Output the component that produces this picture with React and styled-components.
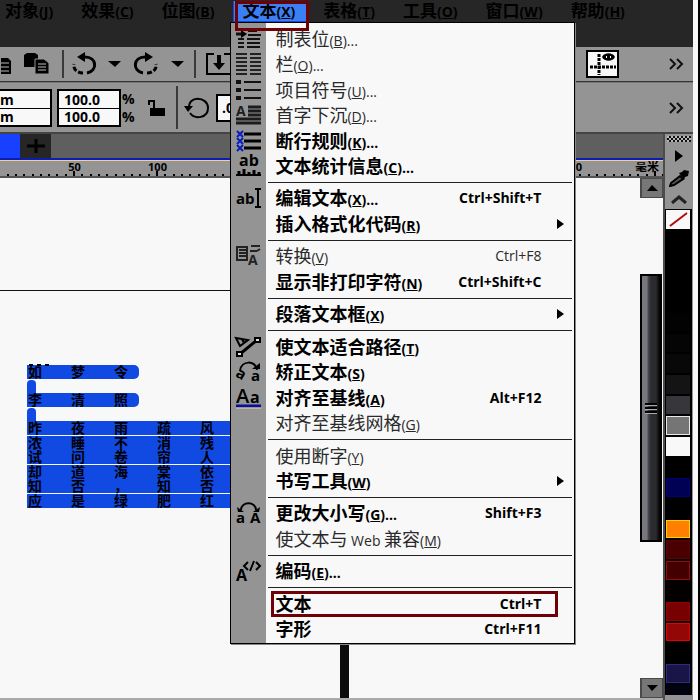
import React, { useState } from 'react';
import styled, { createGlobalStyle, css } from 'styled-components';

const menuTitles = [
	['对象', 'J'],
	['效果', 'C'],
	['位图', 'B'],
	['文本', 'X'],
	['表格', 'T'],
	['工具', 'O'],
	['窗口', 'W'],
	['帮助', 'H'],
];

// null === 구분선
const menuItems = [
	{ text: '制表位', hotkey: 'B', dots: true, icon: 'tabs', disabled: true },
	{ text: '栏', hotkey: 'O', dots: true, icon: 'columns', disabled: true },
	{ text: '项目符号', hotkey: 'U', dots: true, icon: 'bullets', disabled: true },
	{ text: '首字下沉', hotkey: 'D', dots: true, icon: 'dropCap', disabled: true },
	{ text: '断行规则', hotkey: 'K', dots: true, icon: 'breakRule' },
	{ text: '文本统计信息', hotkey: 'C', dots: true, icon: 'stats' },
	null,
	{ text: '编辑文本', hotkey: 'X', dots: true, icon: 'edit', shortcut: 'Ctrl+Shift+T' },
	{ text: '插入格式化代码', hotkey: 'R', submenu: true },
	null,
	{ text: '转换', hotkey: 'V', icon: 'convert', shortcut: 'Ctrl+F8', disabled: true },
	{ text: '显示非打印字符', hotkey: 'N', shortcut: 'Ctrl+Shift+C' },
	null,
	{ text: '段落文本框', hotkey: 'X', submenu: true },
	null,
	{ text: '使文本适合路径', hotkey: 'T', icon: 'path' },
	{ text: '矫正文本', hotkey: 'S', icon: 'straighten' },
	{ text: '对齐至基线', hotkey: 'A', icon: 'baseline', shortcut: 'Alt+F12' },
	{ text: '对齐至基线网格', hotkey: 'G', disabled: true },
	null,
	{ text: '使用断字', hotkey: 'Y', disabled: true },
	{ text: '书写工具', hotkey: 'W', submenu: true },
	null,
	{ text: '更改大小写', hotkey: 'G', dots: true, icon: 'changeCase', shortcut: 'Shift+F3' },
	{ text: '使文本与 Web 兼容', hotkey: 'M', disabled: true },
	null,
	{ text: '编码', hotkey: 'E', dots: true, icon: 'encode' },
	null,
	{ text: '文本', shortcut: 'Ctrl+T', marked: true },
	{ text: '字形', shortcut: 'Ctrl+F11' },
];

const swatches = [
	['#000'],
	['#000'],
	['#000'],
	['#000'],
	['#020202'],
	['#050505'],
	['#080808'],
	['#141414'],
	['#36363b'],
	['#757575', '#e8e8e8'],
	['#f8f8f8'],
	['#000'],
	['#000055', '#00007c'],
	['#000'],
	['#ff7f00', '#ffd000'],
	['#4a0000', '#5c0000'],
	['#440000', '#9c0808'],
	['#040000'],
	['#780000', '#960000'],
	['#930707', '#e80000'],
	['#000'],
	['#1b1446', '#2b2c88'],
	['#03020f'],
];

const verses = ['昨夜雨疏风', '浓睡不消残', '试问卷帘人', '却道海棠依', '知否，知否', '应是绿肥红'];

const icons = {
	tabs: (
		<g>
			<path d="M0 6h7" stroke="#111" strokeWidth="3" />
			<path d="M5 2l6 4-6 4z" />
			<path d="M12 3h9M12 7h13M2 11h6M11 11h13M2 15h6M11 15h13M2 19h6M11 19h13" stroke="#111" strokeWidth="2" />
		</g>
	),
	columns: (
		<path
			d="M0 1h11M14 1h11M0 5h11M14 5h11M0 9h11M14 9h11M0 13h11M14 13h11M0 17h11M14 17h11M0 21h11M14 21h11"
			stroke="#222"
			strokeWidth="2"
		/>
	),
	bullets: (
		<g stroke="#111">
			<path d="M0 3h5M0 11h5M0 19h5" strokeWidth="4" />
			<path d="M8 3h17M8 11h17M8 19h17" strokeWidth="2" />
		</g>
	),
	dropCap: (
		<g>
			<path d="M12 3h13M12 7h13M12 11h13M0 15h25M0 19h25" stroke="#1c1c1c" strokeWidth="3" />
			<text x="0" y="12" fontSize="14" fontWeight="bold" fill="#1c1c1c">A</text>
		</g>
	),
	breakRule: (
		<g>
			<path d="M8 4h17M8 11h17M8 18h17" stroke="#000" strokeWidth="3" />
			<path d="M1 1l6 6M7 1l-6 6M1 8l6 6M7 8l-6 6M1 15l6 6M7 15l-6 6" stroke="#061fbd" strokeWidth="2" />
		</g>
	),
	stats: (
		<g>
			<text x="3" y="11" fontSize="16" fontWeight="bold">ab</text>
			<path d="M0 20h25" stroke="#000" strokeWidth="2" />
			<path d="M3 16v4M8 14v6M13 17v3M18 15v5M23 17v3" stroke="#000" strokeWidth="3" />
		</g>
	),
	edit: (
		<g>
			<text x="0" y="17" fontSize="15" fontWeight="bold">ab</text>
			<path d="M22 2v18M19 2h6M19 20h6" stroke="#000" strokeWidth="2" />
		</g>
	),
	convert: (
		<g>
			<path d="M1 2h10v13H1zM3 5h7M3 8h7M3 11h7" fill="none" stroke="#222" strokeWidth="2" />
			<path d="M15 1h9M14 6h7M21 6l3-2" fill="none" stroke="#222" strokeWidth="2" />
			<text x="12" y="20" fontSize="14" fontWeight="bold" fill="#222">A</text>
		</g>
	),
	path: (
		<g fill="none" stroke="#000">
			<path d="M4 18L21 4" strokeWidth="3" />
			<path d="M1 16h5v4H1zM19 2h5v4h-5z" strokeWidth="2" fill="#ddd" />
			<path d="M0 2l12 2-8 6zM6 3l2 4" strokeWidth="2" />
		</g>
	),
	straighten: (
		<g>
			<path d="M4 10C5-1 20-1 21 9" fill="none" stroke="#000" strokeWidth="2" />
			<path d="M16 8h8V2z" />
			<text x="15" y="20" fontSize="15" fontWeight="bold">a</text>
			<text x="0" y="18" fontSize="15" fontWeight="bold" transform="rotate(30 5 14)">a</text>
		</g>
	),
	baseline: (
		<g>
			<text x="0" y="16" fontSize="20" fontWeight="600">A</text>
			<text x="14" y="16" fontSize="16" fontWeight="bold">a</text>
			<path d="M0 19h25" stroke="#05109c" strokeWidth="3" />
			<path d="M0 21h25" stroke="#f2cf9a" strokeWidth="1" />
		</g>
	),
	changeCase: (
		<g>
			<path d="M5 8C5-1 20-1 20 8" fill="none" stroke="#000" strokeWidth="2" />
			<path d="M1 5l1 5h6zM24 5l-1 5h-6z" />
			<text x="0" y="21" fontSize="15" fontWeight="bold">a</text>
			<text x="14" y="21" fontSize="15" fontWeight="bold">A</text>
		</g>
	),
	encode: (
		<g>
			<text x="0" y="21" fontSize="16" fontWeight="bold">A</text>
			<path d="M12 2L8 6l4 4M20 2l4 4-4 4M18 1l-4 10" fill="none" stroke="#000" strokeWidth="2" />
		</g>
	),
};

function MenuIcon({ name }) {
	return (
		<IconSvg width="26" height="22" viewBox="0 0 26 22" aria-hidden="true">
			{icons[name]}
		</IconSvg>
	);
}

function MenuText({ text, hotkey, dots }) {
	return (
		<span>
			{text.split(/([ A-Za-z]+)/).map((part, i) => (i % 2 ? <Latin key={i}>{part}</Latin> : part))}
			{hotkey && (
				<Latin>
					(<u>{hotkey}</u>){dots && '...'}
				</Latin>
			)}
		</span>
	);
}

function TextMenu() {
	return (
		<Dropdown role="menu">
			{menuItems.map((item, i) =>
				item ? (
					<MenuRow key={i} role="menuitem" disabled={item.disabled} $marked={item.marked}>
						<IconCell>{item.icon && <MenuIcon name={item.icon} />}</IconCell>
						<MenuText {...item} />
						{item.shortcut && <Shortcut>{item.shortcut}</Shortcut>}
						{item.submenu && <SubmenuArrow />}
					</MenuRow>
				) : (
					<Separator key={i} />
				)
			)}
		</Dropdown>
	);
}

function Caret() {
	return (
		<svg width="13" height="8" viewBox="0 0 13 8" aria-hidden="true">
			<path d="M0 1h13L7 7z" />
		</svg>
	);
}

function MoreIcon() {
	return (
		<svg width="15" height="12" viewBox="0 0 15 12" aria-hidden="true">
			<path d="M1 1l5 5-5 5M8 1l5 5-5 5" fill="none" stroke="#111" strokeWidth="2" />
		</svg>
	);
}

function Ruler() {
	const ticks = Array.from({ length: 80 }, (_, i) => i);
	return (
		<RulerBar>
			<RulerMarks>
				{ticks.map((i) => {
					const x = Math.round(74 + ((i - 8) * 83) / 10);
					const major = (i - 8) % 10 === 0;
					return <rect key={i} x={x - 1} y={major ? 10 : 13} width="2" height={major ? 5 : 2} />;
				})}
			</RulerMarks>
			{[50, 100, 150, 200, 250, 300, 350].map((n) => (
				<RulerNumber key={n}>{n}</RulerNumber>
			))}
			<RulerUnit>毫米</RulerUnit>
		</RulerBar>
	);
}

export default function App() {
	const [openMenu, setOpenMenu] = useState('文本');
	const [scale, setScale] = useState({ x: '100.0', y: '100.0' });

	return (
		<Frame>
			<GlobalStyle />
			<MenuBar>
				{menuTitles.map(([text, hotkey]) => {
					const open = openMenu === text;
					return (
						<MenuSlot key={text}>
							<MenuTitle $open={open} onClick={() => setOpenMenu(text)}>
								<MenuText text={text} hotkey={hotkey} />
							</MenuTitle>
							{open && text === '文本' && <TextMenu />}
							{open && <TitleMark />}
						</MenuSlot>
					);
				})}
			</MenuBar>

			<Toolbar>
				<ToolButton aria-label="复制" $width={12}>
					<svg width="11" height="24" viewBox="0 0 11 24">
						<path d="M0 6h7l3 3v13H0z" />
						<path d="M0 11h8M0 15h8M0 19h8" stroke="#bbb" />
					</svg>
				</ToolButton>
				<ToolButton aria-label="粘贴" $width={50}>
					<svg width="26" height="24" viewBox="0 0 26 24">
						<path d="M0 3l3-2h8l3 2v12H0z" />
						<path d="M11 7h9l5 4v11H11z" stroke="#949494" />
						<path d="M14 12h8M14 15h8M14 18h8" stroke="#bbb" />
					</svg>
				</ToolButton>
				<Divider />
				<ToolButton aria-label="撤消" $width={42}>
					<svg width="26" height="24" viewBox="0 0 26 24">
						<path d="M9 5h4c12 0 13 14 2 16" fill="none" stroke="#000" strokeWidth="3" />
						<path d="M11 21C5 21 1 17 2 12" fill="none" stroke="#000" strokeWidth="3" strokeDasharray="5 2" />
						<path d="M5 5l8-5v10z" />
					</svg>
				</ToolButton>
				<ToolButton aria-label="撤消列表" $width={16}>
					<Caret />
				</ToolButton>
				<ToolButton aria-label="重做" $width={48}>
					<svg width="26" height="24" viewBox="0 0 26 24">
						<path d="M16 5h-4C0 5-1 19 10 21" fill="none" stroke="#000" strokeWidth="3" />
						<path d="M14 21c6 0 10-4 9-9" fill="none" stroke="#000" strokeWidth="3" strokeDasharray="5 2" />
						<path d="M20 5l-8-5v10z" />
					</svg>
				</ToolButton>
				<ToolButton aria-label="重做列表" $width={14}>
					<Caret />
				</ToolButton>
				<ToolGap />
				<Divider />
				<ToolButton aria-label="导入" $width={46}>
					<svg width="26" height="22" viewBox="0 0 26 22">
						<path d="M8 1H1v20h24V1h-7" fill="none" stroke="#000" strokeWidth="2" />
						<path d="M11 2h4v8h4l-6 7-6-7h4z" />
					</svg>
				</ToolButton>
				<GuideButton aria-label="显示辅助线">
					<svg width="26" height="22" viewBox="0 0 26 22">
						<path d="M0 14h26M9 1v21" stroke="#000" strokeWidth="3" strokeDasharray="3 1" />
						<path d="M12 4c2-5 11-5 13 0-2 5-11 5-13 0z" />
						<path d="M16 4h1M20 4h1" stroke="#fff" strokeWidth="2" />
					</svg>
				</GuideButton>
				<MoreButton aria-label="更多工具">
					<MoreIcon />
				</MoreButton>
			</Toolbar>

			<PropertyBar>
				<FieldStack $width={52} $flush>
					<Field aria-label="宽度" defaultValue="m" />
					<Field aria-label="高度" defaultValue="m" />
				</FieldStack>
				<FieldStack $width={64}>
					<Field aria-label="水平缩放" value={scale.x} onChange={(e) => setScale({ ...scale, x: e.target.value })} />
					<Field aria-label="垂直缩放" value={scale.y} onChange={(e) => setScale({ ...scale, y: e.target.value })} />
				</FieldStack>
				<Percents>
					<span>%</span>
					<span>%</span>
				</Percents>
				<ToolButton aria-label="锁定比率" $width={40}>
					<svg width="18" height="18" viewBox="0 0 18 18">
						<path d="M2 6V2h5v8" fill="none" stroke="#000" strokeWidth="2" />
						<path d="M3 9h15v8H3z" />
					</svg>
				</ToolButton>
				<Divider />
				<ToolButton aria-label="旋转角度" $width={38}>
					<svg width="26" height="22" viewBox="0 0 26 22">
						<path d="M5 12C3-2 24-1 24 11c0 10-13 12-18 5" fill="none" stroke="#000" strokeWidth="2" />
						<path d="M0 9h9l-5 6z" />
					</svg>
				</ToolButton>
				<AngleField aria-label="角度" defaultValue=".0" />
				<MoreButton aria-label="更多属性">
					<MoreIcon />
				</MoreButton>
			</PropertyBar>

			<Workspace>
				<DocumentArea>
					<TabBar>
						<ActiveTab aria-label="文档" />
						<AddTab aria-label="新建文档">
							<svg width="18" height="14" viewBox="0 0 18 14">
								<path d="M0 7h18M9 0v14" stroke="#000" strokeWidth="3" />
							</svg>
						</AddTab>
					</TabBar>
					<Ruler />
					<CanvasRow>
						<Canvas>
							<Paper>
								<Handles>
									<i />
									<i />
									<i />
								</Handles>
								<Title>
									{[...'如梦令'].map((c) => (
										<span key={c}>{c}</span>
									))}
								</Title>
								<BlankLine />
								<Title>
									{[...'李清照'].map((c) => (
										<span key={c}>{c}</span>
									))}
								</Title>
								<BlankLine />
								{verses.map((line) => (
									<Verse key={line}>
										{[...line].map((c, i) => (
											<span key={i}>{c}</span>
										))}
									</Verse>
								))}
							</Paper>
						</Canvas>
						<ScrollColumn>
							<ScrollButton aria-label="向上滚动">
								<svg width="11" height="6" viewBox="0 0 11 6">
									<path d="M0 6l5-6 6 6z" />
								</svg>
							</ScrollButton>
							<ScrollTrack>
								<ScrollThumb>
									<i />
									<i />
									<i />
								</ScrollThumb>
							</ScrollTrack>
							<ScrollButton aria-label="向下滚动">
								<svg width="11" height="6" viewBox="0 0 11 6">
									<path d="M0 0h11L5 6z" />
								</svg>
							</ScrollButton>
						</ScrollColumn>
					</CanvasRow>
				</DocumentArea>

				<Palette>
					<PaletteHead>
						<Grip />
						<svg width="8" height="12" viewBox="0 0 8 12" aria-hidden="true">
							<path d="M0 0l8 6-8 6z" />
						</svg>
						<svg width="20" height="17" viewBox="0 0 20 17" aria-hidden="true">
							<path d="M1 16l1-3 9-7 3 3-9 6z" fill="#555" stroke="#000" strokeWidth="2" />
							<path d="M10 3l3-1 2-2 5 1-1 5-3 1-1 3z" />
						</svg>
						<svg width="16" height="9" viewBox="0 0 16 9" aria-hidden="true">
							<path d="M1 8l7-6 7 6" fill="none" stroke="#222" strokeWidth="3" />
						</svg>
					</PaletteHead>
					<SwatchList>
						<Swatch aria-label="无颜色" $color="#f8f8f8">
							<svg width="19" height="15" viewBox="0 0 19 15">
								<path d="M1 14L18 1" stroke="#b00b0b" strokeWidth="2" />
							</svg>
						</Swatch>
						{swatches.map(([color, edge], i) => (
							<Swatch key={i} aria-label={color} $color={color} $edge={edge} $short={i === swatches.length - 1} />
						))}
					</SwatchList>
				</Palette>
			</Workspace>
		</Frame>
	);
}

const GlobalStyle = createGlobalStyle`
	* {
		box-sizing: border-box;
	}
	body {
		margin: 0;
		background-color: #f8f8f8;
		font-family: 'Open Sans', 'Noto Sans CJK SC', sans-serif;
		color: #000;
		overflow: hidden;
	}
	button {
		padding: 0;
		border: none;
		background: none;
		color: inherit;
		font: inherit;
	}
	input {
		font: inherit;
		color: inherit;
	}
`;

const Frame = styled.div`
	display: flex;
	flex-direction: column;
	height: 100vh;
	padding-right: 5px;
	border-right: 2px solid #000;
	overflow: hidden;
`;

const MenuBar = styled.nav`
	display: flex;
	flex-shrink: 0;
	align-items: flex-start;
	gap: 7px;
	height: 47px;
	padding-right: 7px;
	background-color: #262626;
`;

const MenuSlot = styled.div`
	position: relative;
	&:first-child {
		margin-left: -4px;
	}
`;

const Latin = styled.span`
	font-size: 14px;
	line-height: 1;
	white-space: pre;
`;

const MenuTitle = styled.button`
	height: 22px;
	padding: 0 11px 0 8px;
	border: 2px solid transparent;
	border-width: 0 1px 2px 1px;
	font-size: 17px;
	font-weight: bold;
	line-height: 20px;
	white-space: nowrap;
	${({ $open }) =>
		$open &&
		css`
			background-color: #3b7ff5;
			border-color: #1746dd;
		`}
`;

const TitleMark = styled.div`
	position: absolute;
	inset: 1px -2px -8px 2px;
	border: 3px solid #6e0006;
	pointer-events: none;
	z-index: 3;
`;

// 왼쪽 아이콘 영역은 배경 그라디언트로 처리
const Dropdown = styled.div`
	position: absolute;
	top: 22px;
	left: -3px;
	z-index: 2;
	display: flex;
	flex-direction: column;
	width: 345px;
	height: calc(100vh - 78px);
	padding: 3px 0 1px;
	border: 1px solid #000;
	background: linear-gradient(to right, #949494 35px, #f8f8f8 35px);
	box-shadow: 1px 1px 0 #888;
`;

const MenuRow = styled.button`
	position: relative;
	display: flex;
	flex: 1 0 24px;
	align-items: center;
	min-height: 0;
	padding-right: 33px;
	font-size: 18px;
	font-weight: bold;
	line-height: 24px;
	text-align: left;
	white-space: nowrap;
	&:disabled {
		color: #2a2a2a;
		font-weight: normal;
	}
	${({ $marked }) =>
		$marked &&
		css`
			&::after {
				content: '';
				position: absolute;
				inset: 0 16px 0 40px;
				border: 3px solid #6e0006;
			}
		`}
`;

const IconCell = styled.span`
	display: flex;
	width: 44px;
	padding-left: 5px;
`;

const IconSvg = styled.svg`
	display: block;
	overflow: visible;
	font-family: 'Open Sans', sans-serif;
`;

const Shortcut = styled.span`
	margin-left: auto;
	font-size: 14px;
`;

const SubmenuArrow = styled.span`
	margin: 0 -23px 0 auto;
	border: 5px solid transparent;
	border-left: 7px solid #000;
	border-right: none;
`;

const Separator = styled.div`
	flex: 0 0 7px;
	margin: 0 2px 0 37px;
	border-top: 3px solid #f8f8f8;
	background: linear-gradient(#222 1px, transparent 1px);
`;

const Toolbar = styled.div`
	display: flex;
	flex-shrink: 0;
	align-items: center;
	height: 35px;
	background-color: #949494;
	border-bottom: 1px solid #333;
`;

const ToolButton = styled.button`
	display: flex;
	flex-shrink: 0;
	align-items: center;
	justify-content: center;
	width: ${({ $width }) => $width}px;
	height: 28px;
`;

const ToolGap = styled.span`
	width: 10px;
`;

const Divider = styled.span`
	align-self: stretch;
	width: 2px;
	margin: 3px 0;
	background-color: #3a3a3a;
`;

const GuideButton = styled.button`
	display: flex;
	align-items: center;
	justify-content: center;
	width: 33px;
	height: 28px;
	margin-left: auto;
	margin-right: 41px;
	border: 2px solid #000;
	background-color: #f8f8f8;
`;

const MoreButton = styled.button`
	display: flex;
	flex-shrink: 0;
	align-items: center;
	justify-content: center;
	width: 33px;
	height: 28px;
`;

const PropertyBar = styled.div`
	display: flex;
	flex-shrink: 0;
	align-items: center;
	height: 52px;
	background-color: #949494;
	border-top: 1px solid #777;
	border-bottom: 2px solid #444;
	${MoreButton} {
		margin-left: auto;
	}
`;

const FieldStack = styled.div`
	display: flex;
	flex-direction: column;
	width: ${({ $width }) => $width}px;
	margin-right: ${({ $flush }) => ($flush ? 5 : 0)}px;
	border: 2px solid #000;
	border-left-width: ${({ $flush }) => ($flush ? 0 : 2)}px;
	background-color: #f8f8f8;
	input {
		padding: 0 0 0 ${({ $flush }) => ($flush ? 0 : 5)}px;
	}
	input + input {
		border-top: 1px solid #000;
	}
`;

const Field = styled.input`
	width: 100%;
	height: 17px;
	border: none;
	background: none;
	font-size: 14px;
	font-weight: bold;
`;

const AngleField = styled.input`
	width: 60px;
	height: 28px;
	padding-left: 4px;
	border: 2px solid #000;
	background-color: #f8f8f8;
	font-size: 14px;
	font-weight: bold;
`;

const Percents = styled.div`
	display: flex;
	flex-direction: column;
	width: 15px;
	padding-left: 1px;
	font-size: 14px;
	font-weight: bold;
	line-height: 18px;
`;

const Workspace = styled.div`
	display: flex;
	flex: 1;
	min-height: 0;
`;

const DocumentArea = styled.main`
	display: flex;
	flex: 1;
	flex-direction: column;
	min-width: 0;
	border-right: 2px solid #4c4c4c;
`;

const TabBar = styled.div`
	display: flex;
	flex-shrink: 0;
	height: 26px;
	background-color: #5f5f5f;
	border-bottom: 2px solid #0b1db0;
`;

const ActiveTab = styled.button`
	width: 20px;
	background-color: #1741ff;
`;

const AddTab = styled.button`
	display: flex;
	align-items: center;
	justify-content: center;
	width: 31px;
	background-color: #262626;
`;

const RulerBar = styled.div`
	position: relative;
	display: flex;
	flex-shrink: 0;
	height: 18px;
	padding-left: 33px;
	overflow: hidden;
	background-color: #949494;
	border-top: 1px solid #f0cf9c;
	border-bottom: 2px solid #555;
	font-size: 11px;
	font-weight: bold;
	line-height: 12px;
`;

const RulerMarks = styled.svg`
	position: absolute;
	inset: 0;
	width: 100%;
	height: 15px;
`;

const RulerNumber = styled.span`
	flex: 0 0 83px;
	text-align: center;
`;

const RulerUnit = styled.span`
	flex-shrink: 0;
	margin: 0 4px 0 auto;
	font-size: 12px;
`;

const CanvasRow = styled.div`
	display: flex;
	flex: 1;
	min-height: 0;
	border-bottom: 2px solid #aaa;
`;

const Canvas = styled.div`
	display: flex;
	flex: 1;
	padding-top: 112px;
	background-color: #f8f8f8;
`;

const Paper = styled.article`
	width: 349px;
	padding: 73px 0 0 27px;
	border-top: 1px solid #111;
	border-right: 9px solid #0b0b0b;
	font-size: 14px;
	font-weight: bold;
	line-height: 14px;
`;

const Handles = styled.div`
	display: flex;
	gap: 4px;
	height: 1px;
	padding-left: 2px;
	i {
		width: 4px;
		height: 2px;
		background-color: #000;
	}
`;

const Title = styled.div`
	display: grid;
	grid-template-columns: 43px 43px 25px;
	width: max-content;
	height: 14px;
	padding-left: 1px;
	border-radius: 0 5px 5px 0;
	background-color: #1149e3;
`;

const BlankLine = styled.div`
	width: 9px;
	height: 13px;
	margin-top: 1px;
	border-radius: 4px 4px 0 0;
	background-color: #1149e3;
`;

const Verse = styled.div`
	display: grid;
	grid-template-columns: repeat(auto-fill, 43px);
	height: 14px;
	padding-left: 1px;
	background-color: #1149e3;
	&:nth-of-type(2n) {
		margin-bottom: 1px;
	}
`;

const ScrollColumn = styled.div`
	display: flex;
	flex-direction: column;
	width: 23px;
	background-color: #f8f8f8;
`;

const ScrollButton = styled.button`
	display: flex;
	flex-shrink: 0;
	align-items: center;
	justify-content: center;
	height: 20px;
	background-color: #777;
	border: 1px solid #4a4a4a;
	border-left-width: 2px;
`;

const ScrollTrack = styled.div`
	display: flex;
	flex: 1;
	flex-direction: column;
	padding: 76px 1px 136px 0;
`;

const ScrollThumb = styled.div`
	display: flex;
	flex: 1;
	flex-direction: column;
	align-items: center;
	justify-content: center;
	gap: 1px;
	border: 2px solid #000;
	background: linear-gradient(to right, #77777f 5px, #4b4b53 6px, #2a2a2f 9px, #2a2a2f 14px, #000);
	i {
		width: 12px;
		height: 3px;
		background-color: #000;
		border-bottom: 1px solid #aaa;
	}
`;

const Palette = styled.aside`
	display: flex;
	flex-direction: column;
	width: 28px;
	padding-bottom: 5px;
	background-color: #949494;
`;

const PaletteHead = styled.div`
	display: flex;
	flex-direction: column;
	align-items: center;
	justify-content: space-between;
	height: 75px;
	padding: 2px 0 5px;
`;

const Grip = styled.span`
	width: 24px;
	height: 6px;
	background: repeating-conic-gradient(#111 0 25%, #b5b5b5 0 50%) 0 0 / 4px 4px;
`;

const SwatchList = styled.div`
	display: flex;
	flex: 1;
	flex-direction: column;
	gap: 2px;
	width: 27px;
	padding: 1px 2px 0 1px;
	background-color: #000;
`;

const Swatch = styled.button`
	display: flex;
	flex: ${({ $short }) => ($short ? 0.5 : 1)} 1 0;
	align-items: center;
	justify-content: center;
	min-height: 0;
	border: 1px solid ${({ $edge, $color }) => $edge || $color};
	background-color: ${({ $color }) => $color};
`;
